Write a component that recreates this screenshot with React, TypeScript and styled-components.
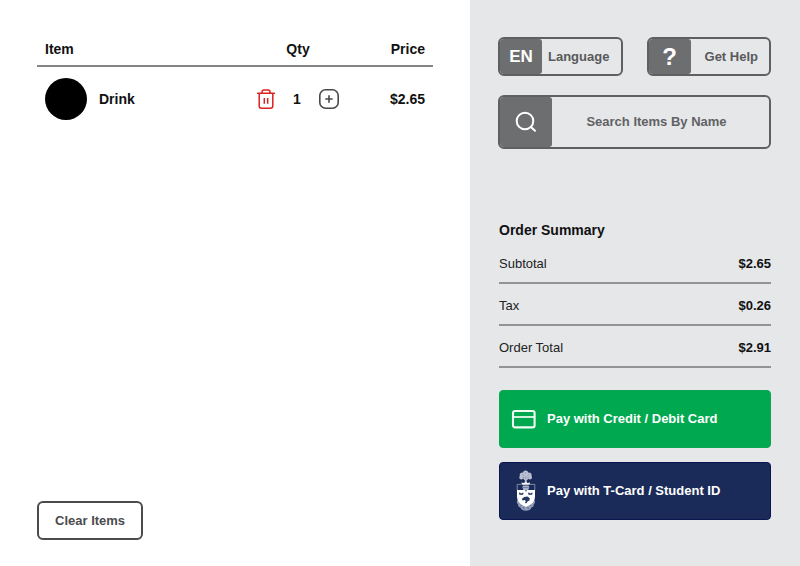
import React from "react";
import styled, { createGlobalStyle } from "styled-components";

const GlobalStyle = createGlobalStyle`
  *, *::before, *::after { box-sizing: border-box; }
  body {
    margin: 0;
    background: #ffffff;
    color: #111111;
    font-family: "Liberation Sans", Arial, sans-serif;
    font-size: 13px;
    line-height: 20px;
  }
  button, input { font: inherit; color: inherit; }
`;

const Page = styled.div`
  display: grid;
  grid-template-columns: 47fr 33fr;
  min-height: 100vh;
`;

const Cart = styled.main`
  display: flex;
  flex-direction: column;
  justify-content: space-between;
  align-items: flex-start;
  padding: 32px 37px 26px;
`;

const ItemTable = styled.table`
  width: 100%;
  border-collapse: separate;
  border-spacing: 0;
  font-size: 14px;
  font-weight: bold;
`;

const HeadCell = styled.th<{ $align: "left" | "center" | "right" }>`
  height: 35px;
  padding: 0 8px;
  border-bottom: 2px solid #858585;
  text-align: ${(p) => p.$align};
`;

const Cell = styled.td<{ $align: "left" | "center" | "right" }>`
  height: 64px;
  padding: 0 8px;
  text-align: ${(p) => p.$align};
`;

const Product = styled.div`
  display: flex;
  align-items: center;
  gap: 12px;
`;

const Thumb = styled.span`
  width: 42px;
  height: 42px;
  border-radius: 50%;
  background: #000000;
`;

const Quantity = styled.div`
  display: flex;
  align-items: center;
  justify-content: center;
  gap: 18px;
`;

const IconButton = styled.button`
  display: flex;
  padding: 0;
  border: 0;
  background: none;
  cursor: pointer;
`;

const ClearButton = styled.button`
  height: 39px;
  padding: 0 16px;
  border: 2px solid #4b4b4d;
  border-radius: 6px;
  background: #ffffff;
  color: #4b4b4d;
  font-weight: bold;
  cursor: pointer;
`;

const Sidebar = styled.aside`
  padding: 37px 29px 37px 28px;
  background: #e6e7e9;
`;

const ToolRow = styled.div`
  display: flex;
  justify-content: space-between;
  gap: 24px;
  margin-bottom: 19px;
`;

const ToolButton = styled.button`
  flex: 1;
  display: flex;
  height: 39px;
  padding: 0;
  border: 2px solid #5f6062;
  border-radius: 6px;
  overflow: hidden;
  background: transparent;
  color: #58595b;
  font-weight: bold;
  cursor: pointer;
`;

const ToolBadge = styled.span<{ $size: number }>`
  display: flex;
  flex: 0 0 42px;
  align-items: center;
  justify-content: center;
  align-self: stretch;
  border-radius: 0 3px 3px 0;
  background: #6d6e70;
  color: #ffffff;
  font-size: ${(p) => p.$size}px;
`;

const ToolLabel = styled.span<{ $end?: boolean }>`
  flex: 1;
  align-self: center;
  padding: 0 ${(p) => (p.$end ? 11 : 6)}px;
  text-align: ${(p) => (p.$end ? "right" : "left")};
  white-space: nowrap;
`;

const SearchBox = styled.label`
  display: flex;
  height: 54px;
  border: 2px solid #5f6062;
  border-radius: 6px;
  overflow: hidden;
`;

const SearchBadge = styled.span`
  display: flex;
  flex: 0 0 52px;
  align-items: center;
  justify-content: center;
  border-radius: 0 3px 3px 0;
  background: #6d6e70;
`;

const SearchInput = styled.input`
  flex: 1;
  min-width: 0;
  padding: 0 16px 0 8px;
  border: 0;
  outline: 0;
  background: transparent;
  color: #58595b;
  font-weight: bold;
  text-align: center;
  &::placeholder { color: #616264; opacity: 1; }
`;

const Summary = styled.section`
  margin-top: 69px;
  padding-left: 1px;
`;

const SummaryTitle = styled.h2`
  margin: 0;
  font-size: 14px;
  line-height: 24px;
`;

const Totals = styled.dl`
  margin: 0 0 22px;
`;

const TotalRow = styled.div`
  display: flex;
  align-items: center;
  justify-content: space-between;
  height: 42px;
  padding-top: 3px;
  border-bottom: 2px solid #939497;
`;

const TotalName = styled.dt`
  color: #222222;
`;

const TotalValue = styled.dd`
  margin: 0;
  font-weight: bold;
`;

const PayList = styled.div`
  display: grid;
  gap: 14px;
`;

const PayButton = styled.button<{ $color: string; $edge: string }>`
  display: grid;
  grid-template-columns: 26px 1fr;
  align-items: center;
  justify-items: start;
  gap: 10px;
  height: 58px;
  padding: 0 11px;
  border: 1px solid ${(p) => p.$edge};
  border-radius: 4px;
  background: ${(p) => p.$color};
  color: #ffffff;
  font-weight: bold;
  cursor: pointer;
`;

const TrashIcon = () => (
  <svg width="18" height="20" viewBox="0 0 18 20" fill="none" stroke="#d8231f" strokeWidth="1.5" aria-hidden="true">
    <path d="M0.7 4.3H17.3" strokeLinecap="round" />
    <path d="M5 4.2V3Q5 0.9 7 0.9H11Q13 0.9 13 3V4.2" />
    <path d="M2.2 4.5V17Q2.2 19.2 4.4 19.2H13.6Q15.8 19.2 15.8 17V4.5" />
    <path d="M7.3 9V14.8M10.7 9V14.8" />
  </svg>
);

const PlusIcon = () => (
  <svg width="20" height="20" viewBox="0 0 20 20" fill="none" stroke="#48484a" aria-hidden="true">
    <rect x="0.8" y="0.8" width="18.4" height="18.4" rx="5.8" strokeWidth="1.6" />
    <path d="M10 6.3V13.7M6.3 10H13.7" strokeWidth="1.6" />
  </svg>
);

const SearchIcon = () => (
  <svg width="22" height="22" viewBox="0 0 22 22" fill="none" stroke="#ffffff" strokeWidth="2" strokeLinecap="round" aria-hidden="true">
    <circle cx="10" cy="10" r="8.3" />
    <path d="M16.2 16.2L20 19.8" />
  </svg>
);

const CardIcon = () => (
  <svg width="26" height="20" viewBox="0 0 26 20" fill="none" stroke="#f1fff2" aria-hidden="true">
    <rect x="2" y="2" width="21.6" height="16.4" rx="2" strokeWidth="2.1" />
    <path d="M2 8H23.6" strokeWidth="1.7" />
  </svg>
);

const CrestIcon = () => (
  <svg width="26" height="42" viewBox="0 0 26 42" aria-hidden="true">
    <g fill="#b9c0d2">
      <circle cx="14.6" cy="3.2" r="2.6" />
      <circle cx="11.3" cy="5" r="2.6" />
      <circle cx="18" cy="5" r="2.6" />
      <circle cx="10.4" cy="7.5" r="2.1" />
      <circle cx="18.9" cy="7.5" r="2.1" />
      <circle cx="14.8" cy="7.4" r="2.6" />
      <path d="M13.8 9h2v4h-2z" />
    </g>
    <g stroke="#7885a6" strokeWidth="0.6" fill="none">
      <path d="M11 4.4l2 1.4M15 2.2l-1 2M18.6 4l-2 1.7M14.8 9V6M11.5 7.8l1.8-.5M18.2 7.8l-1.9-.5" />
    </g>
    <path d="M10.4 12.4l2.4 .7 2-1 2 1 2.4-.7-.7 2.4h-7.4z" fill="#f7f8fb" />
    <path d="M12 15.4h5.6l.7 2-1 2.1.7 1.4h-6.4l.7-1.5-1-2z" fill="#a9b2c8" />
    <path d="M12 17.5h5.6" stroke="#53648d" strokeWidth="0.6" />
    <path d="M6.2 20.4V14.4H10.6M19 14.4H23.8V20.4" fill="none" stroke="#8995b3" strokeWidth="0.9" />
    <path d="M7.3 29.5Q4.3 32 7.1 34.4Q6.8 37 9.4 37.4Q10.3 40.8 14.9 40.8Q19.5 40.8 20.4 37.4Q23 37 22.7 34.4Q25.5 32 22.5 29.5L19.8 34L14.9 36.5L10 34Z" fill="#929db9" />
    <path d="M7.6 32.2l2.4 2M9.5 36l2-1.4M12.2 39l1-2.4M17.5 39l-1-2.4M20.2 36l-2-1.4M22.1 32.2l-2.4 2" stroke="#4a5a83" strokeWidth="0.7" />
    <path d="M6 20.1H24V27Q24 33.6 15 37Q6 33.6 6 27Z" fill="#ffffff" />
    <g fill="#253661">
      <path d="M8.1 22.6l2.1.6 2.1-.6v1.8l-2.1.5-2.1-.5z" />
      <path d="M17.2 22.6l2.1.6 2.1-.6v1.8l-2.1.5-2.1-.5z" />
      <path d="M10.8 29l2.3-2.1 3.3-.4 2.4 1.8-.4 2.3-2 1-.8 1.6-1.7-.2.9-1.8-1-1.1-2 .3z" />
    </g>
    <path d="M14 20.1h2l-.4 1.4h-1.2z" fill="#6a7899" />
    <path d="M10.2 22.8v1.6M19.3 22.8v1.6" stroke="#ffffff" strokeWidth="0.4" />
  </svg>
);

const totals = [
  { name: "Subtotal", value: "$2.65" },
  { name: "Tax", value: "$0.26" },
  { name: "Order Total", value: "$2.91" },
];

export default function App() {
  return (
    <>
      <GlobalStyle />
      <Page>
        <Cart>
          <ItemTable>
            <colgroup>
              <col />
              <col width="98" />
              <col width="86" />
            </colgroup>
            <thead>
              <tr>
                <HeadCell scope="col" $align="left">Item</HeadCell>
                <HeadCell scope="col" $align="center">Qty</HeadCell>
                <HeadCell scope="col" $align="right">Price</HeadCell>
              </tr>
            </thead>
            <tbody>
              <tr>
                <Cell $align="left">
                  <Product><Thumb />Drink</Product>
                </Cell>
                <Cell $align="center">
                  <Quantity>
                    <IconButton type="button" aria-label="Remove Drink"><TrashIcon /></IconButton>
                    <span>1</span>
                    <IconButton type="button" aria-label="Add another Drink"><PlusIcon /></IconButton>
                  </Quantity>
                </Cell>
                <Cell $align="right">$2.65</Cell>
              </tr>
            </tbody>
          </ItemTable>
          <ClearButton type="button">Clear Items</ClearButton>
        </Cart>

        <Sidebar>
          <ToolRow>
            <ToolButton type="button">
              <ToolBadge $size={17}>EN</ToolBadge>
              <ToolLabel>Language</ToolLabel>
            </ToolButton>
            <ToolButton type="button">
              <ToolBadge $size={24}>?</ToolBadge>
              <ToolLabel $end>Get Help</ToolLabel>
            </ToolButton>
          </ToolRow>
          <SearchBox>
            <SearchBadge><SearchIcon /></SearchBadge>
            <SearchInput type="text" aria-label="Search Items By Name" placeholder="Search Items By Name" />
          </SearchBox>

          <Summary>
            <SummaryTitle>Order Summary</SummaryTitle>
            <Totals>
              {totals.map((t) => (
                <TotalRow key={t.name}>
                  <TotalName>{t.name}</TotalName>
                  <TotalValue>{t.value}</TotalValue>
                </TotalRow>
              ))}
            </Totals>
            <PayList>
              <PayButton type="button" $color="#00a94f" $edge="#0ca552">
                <CardIcon />
                <span>Pay with Credit / Debit Card</span>
              </PayButton>
              <PayButton type="button" $color="#1b2b59" $edge="#0b1650">
                <CrestIcon />
                <span>Pay with T-Card / Student ID</span>
              </PayButton>
            </PayList>
          </Summary>
        </Sidebar>
      </Page>
    </>
  );
}
